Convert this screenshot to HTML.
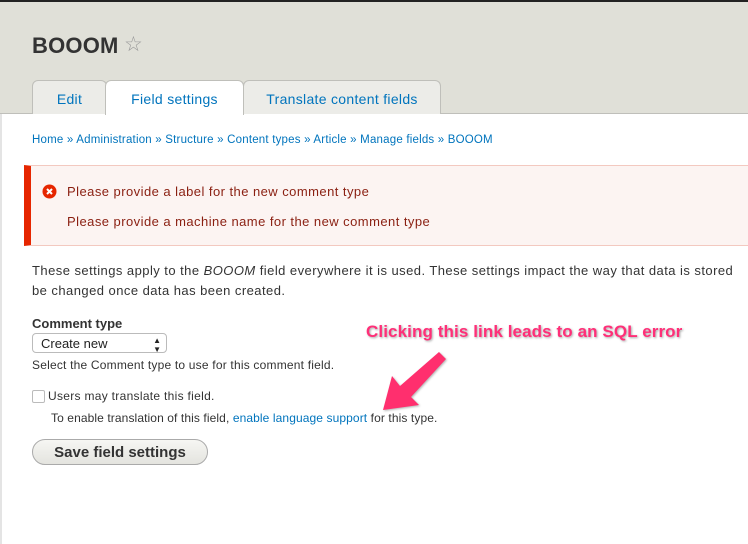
<!DOCTYPE html>
<html><head><style>
body{margin:0;width:748px;height:543px;overflow:hidden;background:#fff;font-family:"Liberation Sans",sans-serif;position:relative}
.lb{position:absolute;left:0;top:114px;width:2px;height:430px;background:#e4e4e4}
.hdr{position:absolute;left:0;top:0;width:748px;height:114px;background:#e0e0d8;border-top:2px solid #222;box-sizing:border-box;border-bottom:1px solid #bfbfba}
h1{position:absolute;left:32px;top:33px;margin:0;font-size:22px;color:#333;font-weight:bold;letter-spacing:0.2px}
.star{position:absolute;left:124px;top:32px;font-size:21px;color:#999}
.tab{position:absolute;top:80px;height:34px;background:#ecece8;border:1px solid #bfbfba;border-bottom:none;border-radius:6px 6px 0 0;box-sizing:border-box;font-size:14px;color:#0074bd;text-align:center;line-height:36px;letter-spacing:0.3px}
.t{position:absolute;font-size:13px;color:#333;white-space:nowrap;letter-spacing:0.45px}
a{color:#0074bd;text-decoration:none}
.msg{position:absolute;left:24px;top:165px;width:730px;height:81px;background:#fcf4f2;border:1px solid #f3c9c0;border-left:7px solid #e62600;box-sizing:border-box}
</style></head><body>
<div class="hdr"></div><div class="lb"></div>
<h1>BOOOM</h1><div class="star">☆</div>
<div class="tab" style="left:32px;width:75px">Edit</div>
<div class="tab" style="left:105px;width:139px;background:#fff;height:35px">Field settings</div>
<div class="tab" style="left:243px;width:198px">Translate content fields</div>
<div class="t" style="left:32px;top:134px;font-size:11.5px;color:#0074bd;letter-spacing:0.2px">Home » Administration » Structure » Content types » Article » Manage fields » BOOOM</div>
<div class="msg"></div>
<svg style="position:absolute;left:42px;top:184px" width="15" height="15"><circle cx="7.5" cy="7.5" r="7" fill="#e62600"/><path d="M5 5L10 10M10 5L5 10" stroke="#fff" stroke-width="2"/></svg>
<div class="t" style="left:67px;top:184px;color:#8a1f11">Please provide a label for the new comment type</div>
<div class="t" style="left:67px;top:214px;color:#8a1f11">Please provide a machine name for the new comment type</div>
<div class="t" style="left:32px;top:263px;letter-spacing:0.45px">These settings apply to the <i>BOOOM</i> field everywhere it is used. These settings impact the way that data is stored</div>
<div class="t" style="left:32px;top:283px;letter-spacing:0.45px">be changed once data has been created.</div>
<div class="t" style="left:32px;top:316px;font-weight:bold;letter-spacing:0">Comment type</div>
<div style="position:absolute;left:32px;top:333px;width:135px;height:20px;border:1px solid #bbb;border-radius:4px;box-sizing:border-box;font-size:13px;line-height:19px;padding-left:8px;color:#222">Create new<span style="position:absolute;right:5px;top:2px;font-size:8px;line-height:9px">▲<br>▼</span></div>
<div class="t" style="left:32px;top:358px;font-size:12px;letter-spacing:0.2px">Select the Comment type to use for this comment field.</div>
<div style="position:absolute;left:32px;top:390px;width:11px;height:11px;border:1px solid #bbb;border-radius:2px"></div>
<div class="t" style="left:48px;top:389px;font-size:12px;letter-spacing:0.3px">Users may translate this field.</div>
<div class="t" style="left:51px;top:411px;font-size:12px;letter-spacing:0.1px">To enable translation of this field, <a>enable language support</a> for this type.</div>
<div style="position:absolute;left:32px;top:439px;width:176px;height:26px;border:1px solid #aaa;border-radius:14px;background:linear-gradient(#f6f6f3,#e4e4df);box-sizing:border-box;font-size:15px;font-weight:bold;color:#333;text-align:center;line-height:25px">Save field settings</div>
<div class="t" style="left:366px;top:322px;font-size:17px;font-weight:bold;color:#ff2f78;letter-spacing:0.1px;text-shadow:1px 1px 2px rgba(0,0,0,.35)">Clicking this link leads to an SQL error</div>
<svg style="position:absolute;left:375px;top:345px" width="80" height="75"><path d="M64 7 L71 14 L36 52 L44 60 L8 65 L17 31 L25 41 Z" fill="#ff2f6e" style="filter:drop-shadow(1px 1px 1px rgba(0,0,0,.3))"/></svg>
</body></html>
